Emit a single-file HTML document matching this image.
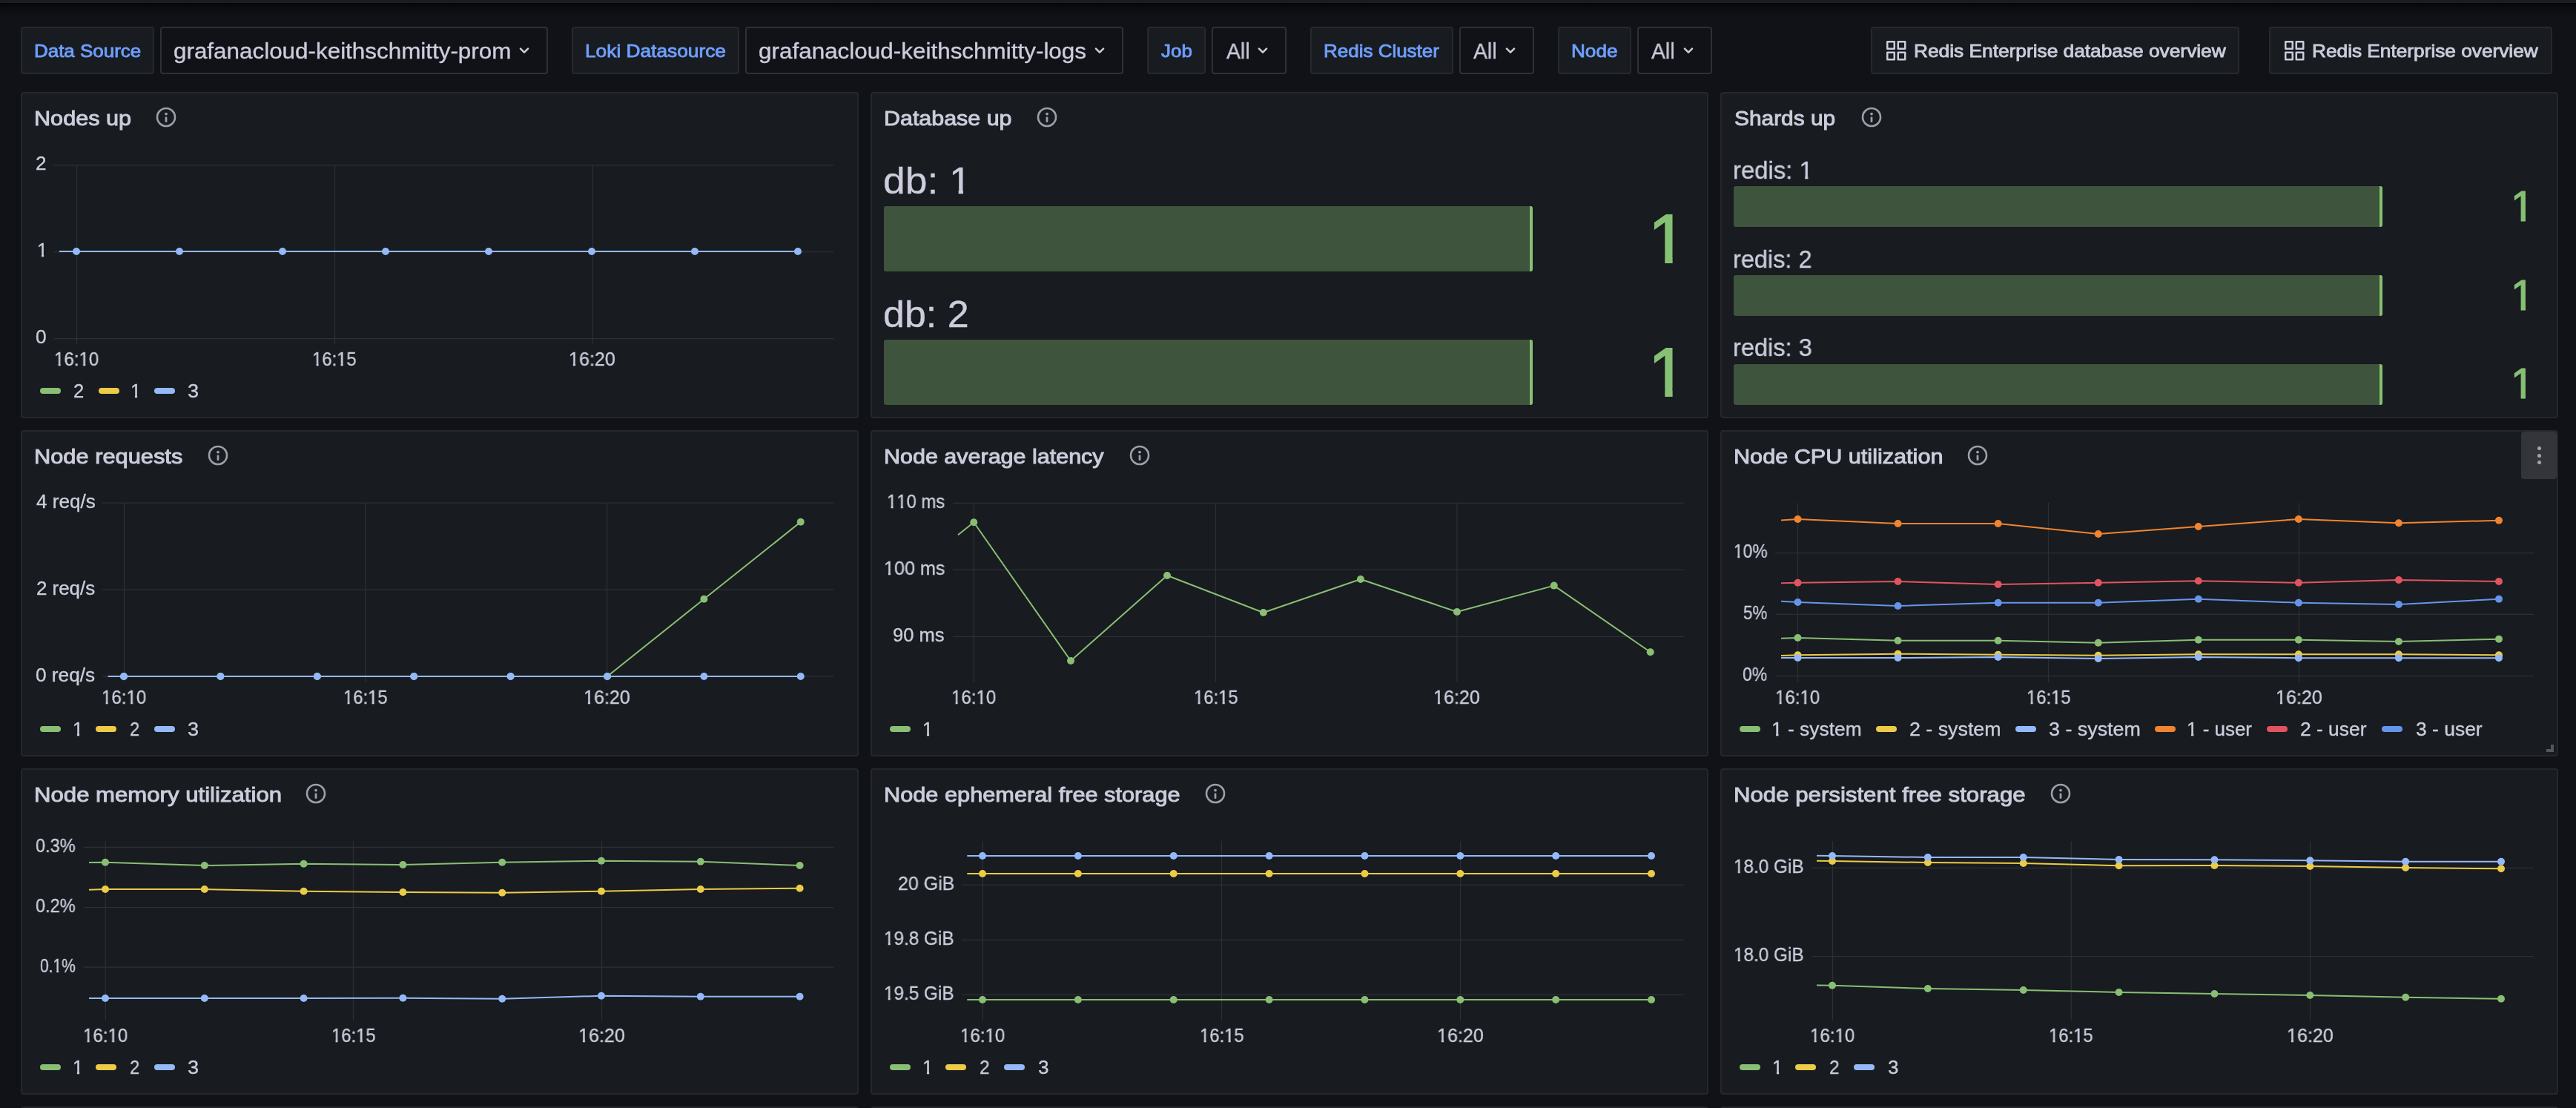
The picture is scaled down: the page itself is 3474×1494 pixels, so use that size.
<!DOCTYPE html>
<html lang="en"><head><meta charset="utf-8"><title>Redis Enterprise node overview</title><style>
*{box-sizing:border-box;margin:0;padding:0}
html,body{width:3474px;height:1494px;overflow:hidden;background:#111217}
body{position:relative;font-family:"Liberation Sans",sans-serif;color:#ccccdc}
.t{position:absolute;white-space:nowrap;line-height:1;font-weight:400;will-change:transform;transform-origin:0 0;font-kerning:none}
.topstrip{position:absolute;left:0;top:0;width:3474px;height:4px;background:#1b1d22}
.topshadow{position:absolute;left:0;top:4px;width:3474px;height:22px;background:linear-gradient(rgba(3,3,5,.85),rgba(5,5,8,.55) 22%,rgba(8,8,11,.25) 55%,rgba(17,18,23,0))}
.lbl,.sel,.lnk{position:absolute;top:36px;height:64px;border-radius:4px;border:2px solid #2a2c32}
.lbl,.lnk{background:#181b1f;border-color:#26282e}
.sel{background:#111217;border-color:#2e3036}
.chev,.apps,.info,.chart{position:absolute}
.panel{position:absolute;background:#181b1f;border:2px solid #25272d;border-radius:4px}
.bgval{clip-path:polygon(0 0,100% 0,100% 74%,.352em 74%,.352em 100%,.24em 100%,.24em 74%,0 74%)}
.sw{position:absolute;width:28px;height:8px;border-radius:4px}
.bar{position:absolute;background:#3e543c;border-radius:3px;overflow:hidden}
.bar b{position:absolute;right:0;top:0;bottom:0;width:4px;background:#86c074}
.menu{position:absolute;left:3400px;top:582px;width:48px;height:64px;border-radius:4px;background:#33353b}
.menu i{position:absolute;left:21.5px;width:5px;height:5px;border-radius:50%;background:#a3a4b0}
.menu i:nth-child(1){top:20px}.menu i:nth-child(2){top:29.5px}.menu i:nth-child(3){top:39px}
.resize{position:absolute;left:3434px;top:1004px;width:10px;height:10px;border-right:4px solid #565656;border-bottom:4px solid #565656}
.o0{clip-path:polygon(0 0,100% 0,100% 71.63%,0.358em 71.63%,0.358em 100%,0.232em 100%,0.232em 71.63%,0 71.63%)}
.o1{clip-path:polygon(0 0,100% 0,100% 74.30%,0.354em 74.30%,0.354em 100%,0.236em 100%,0.236em 74.30%,0 74.30%)}
.o2{clip-path:polygon(0 0,100% 0,100% 73.53%,0.356em 73.53%,0.356em 100%,0.234em 100%,0.234em 73.53%,0 73.53%)}
.o{display:inline-block}
</style></head>
<body>
<header class="topstrip"></header><div class="topshadow"></div>
<nav class="controls">
<div class="lbl" style="left:28px;width:180px"></div><span class="t lbltxt" style="left:45.91px;top:57px;font-size:24.0px;color:#6e9fff;transform:scaleX(1.0809);-webkit-text-stroke:0.85px #6e9fff;">Data Source</span>
<div class="sel" style="left:216px;width:523px"></div><span class="t seltxt" style="left:233.99px;top:54px;font-size:29.4px;color:#ccccdc;transform:scaleX(1.0681);-webkit-text-stroke:0.35px #ccccdc;">grafanacloud-keithschmitty-prom</span><svg class="chev" style="left:699.2px;top:62px" width="16" height="12" viewBox="0 0 16 12"><path d="M2.95 3.55L8 8.6l5.05-5.05" fill="none" stroke="#ccccdc" stroke-width="2.5" stroke-linecap="round" stroke-linejoin="round"/></svg>
<div class="lbl" style="left:771px;width:226px"></div><span class="t lbltxt" style="left:788.83px;top:57px;font-size:24.0px;color:#6e9fff;transform:scaleX(1.0952);-webkit-text-stroke:0.85px #6e9fff;">Loki Datasource</span>
<div class="sel" style="left:1005px;width:510px"></div><span class="t seltxt" style="left:1022.99px;top:54px;font-size:29.4px;color:#ccccdc;transform:scaleX(1.0696);-webkit-text-stroke:0.35px #ccccdc;">grafanacloud-keithschmitty-logs</span><svg class="chev" style="left:1475px;top:62px" width="16" height="12" viewBox="0 0 16 12"><path d="M2.95 3.55L8 8.6l5.05-5.05" fill="none" stroke="#ccccdc" stroke-width="2.5" stroke-linecap="round" stroke-linejoin="round"/></svg>
<div class="lbl" style="left:1547px;width:79px"></div><span class="t lbltxt" style="left:1566.42px;top:57px;font-size:24.0px;color:#6e9fff;transform:scaleX(1.0804);-webkit-text-stroke:0.85px #6e9fff;">Job</span>
<div class="sel" style="left:1634px;width:101px"></div><span class="t seltxt" style="left:1653.95px;top:54px;font-size:29.4px;color:#ccccdc;transform:scaleX(0.9667);-webkit-text-stroke:0.35px #ccccdc;">All</span><svg class="chev" style="left:1695.25px;top:62px" width="16" height="12" viewBox="0 0 16 12"><path d="M2.95 3.55L8 8.6l5.05-5.05" fill="none" stroke="#ccccdc" stroke-width="2.5" stroke-linecap="round" stroke-linejoin="round"/></svg>
<div class="lbl" style="left:1767px;width:193px"></div><span class="t lbltxt" style="left:1785.41px;top:57px;font-size:24.0px;color:#6e9fff;transform:scaleX(1.0824);-webkit-text-stroke:0.85px #6e9fff;">Redis Cluster</span>
<div class="sel" style="left:1968px;width:101px"></div><span class="t seltxt" style="left:1987.20px;top:54px;font-size:29.4px;color:#ccccdc;transform:scaleX(0.9667);-webkit-text-stroke:0.35px #ccccdc;">All</span><svg class="chev" style="left:2028.75px;top:62px" width="16" height="12" viewBox="0 0 16 12"><path d="M2.95 3.55L8 8.6l5.05-5.05" fill="none" stroke="#ccccdc" stroke-width="2.5" stroke-linecap="round" stroke-linejoin="round"/></svg>
<div class="lbl" style="left:2101px;width:99px"></div><span class="t lbltxt" style="left:2119.15px;top:57px;font-size:24.0px;color:#6e9fff;transform:scaleX(1.0889);-webkit-text-stroke:0.85px #6e9fff;">Node</span>
<div class="sel" style="left:2208px;width:101px"></div><span class="t seltxt" style="left:2227.20px;top:54px;font-size:29.4px;color:#ccccdc;transform:scaleX(0.9667);-webkit-text-stroke:0.35px #ccccdc;">All</span><svg class="chev" style="left:2268.75px;top:62px" width="16" height="12" viewBox="0 0 16 12"><path d="M2.95 3.55L8 8.6l5.05-5.05" fill="none" stroke="#ccccdc" stroke-width="2.5" stroke-linecap="round" stroke-linejoin="round"/></svg>
<a class="lnk" style="left:2523px;width:497px"></a><svg class="apps" style="left:2543.5px;top:54.6px" width="27" height="27" viewBox="0 0 27 27"><path d="M1.25 1.25h9.5v9.5h-9.5zM15.75 1.25h9.5v9.5h-9.5zM1.25 15.75h9.5v9.5h-9.5zM15.75 15.75h9.5v9.5h-9.5z" fill="none" stroke="#ccccdc" stroke-width="2.5" stroke-linejoin="round"/></svg><span class="t lnktxt" style="left:2580.64px;top:57px;font-size:24.0px;color:#ccccdc;transform:scaleX(1.0950);-webkit-text-stroke:0.85px #ccccdc;">Redis Enterprise database overview</span>
<a class="lnk" style="left:3060px;width:382px"></a><svg class="apps" style="left:3080.75px;top:54.6px" width="27" height="27" viewBox="0 0 27 27"><path d="M1.25 1.25h9.5v9.5h-9.5zM15.75 1.25h9.5v9.5h-9.5zM1.25 15.75h9.5v9.5h-9.5zM15.75 15.75h9.5v9.5h-9.5z" fill="none" stroke="#ccccdc" stroke-width="2.5" stroke-linejoin="round"/></svg><span class="t lnktxt" style="left:3118.14px;top:57px;font-size:24.0px;color:#ccccdc;transform:scaleX(1.0931);-webkit-text-stroke:0.85px #ccccdc;">Redis Enterprise overview</span>
</nav>
<main>
<section><div class="panel" style="left:28px;top:124px;width:1130px;height:440px"></div>
<span class="t title" style="left:45.92px;top:146px;font-size:28.0px;color:#ccccdc;transform:scaleX(1.0931);-webkit-text-stroke:0.95px #ccccdc;">Nodes up</span><svg class="info" style="left:209px;top:143px" width="30" height="30" viewBox="0 0 30 30"><circle cx="15" cy="15" r="12" fill="none" stroke="#9e9eab" stroke-width="2.6"/><circle cx="15" cy="10.6" r="1.9" fill="#9e9eab"/><rect x="13.6" y="14.4" width="2.8" height="7.6" rx="1.2" fill="#9e9eab"/></svg>
<svg class="chart" style="left:28px;top:124px" width="1130" height="440" viewBox="28 124 1130 440"><path d="M103.5 222V464M451.5 222V464M799.5 222V464M72.5 222.5H1124.5M72.5 339.5H1124.5M72.5 456.5H1124.5" stroke="#2c3035" stroke-width="1.25" fill="none"/><path d="M80 339L103 339L242 339L381 339L520 339L659 339L798 339L937 339L1076 339" stroke="#94b9f8" stroke-width="2" fill="none" stroke-linejoin="round"/><g fill="#94b9f8"><circle cx="103" cy="339" r="5"/><circle cx="242" cy="339" r="5"/><circle cx="381" cy="339" r="5"/><circle cx="520" cy="339" r="5"/><circle cx="659" cy="339" r="5"/><circle cx="798" cy="339" r="5"/><circle cx="937" cy="339" r="5"/><circle cx="1076" cy="339" r="5"/></g></svg>
<span class="t tick" style="left:47.80px;top:208px;font-size:25.56px;color:#ccccdc;transform:scaleX(1.0194);-webkit-text-stroke:0.35px #ccccdc;">2</span><span class="t tick o0" style="left:49.77px;top:325px;font-size:25.56px;color:#ccccdc;-webkit-text-stroke:0.35px #ccccdc;">1</span><span class="t tick" style="left:47.55px;top:442px;font-size:25.56px;color:#ccccdc;transform:scaleX(1.0286);-webkit-text-stroke:0.35px #ccccdc;">0</span>
<span class="t tick" style="left:72.67px;top:472px;font-size:25.56px;color:#ccccdc;transform:scaleX(0.9423);-webkit-text-stroke:0.35px #ccccdc;"><span class="o o0">1</span>6:<span class="o o0">1</span>0</span><span class="t tick" style="left:420.57px;top:472px;font-size:25.56px;color:#ccccdc;transform:scaleX(0.9318);-webkit-text-stroke:0.35px #ccccdc;"><span class="o o0">1</span>6:<span class="o o0">1</span>5</span><span class="t tick" style="left:767.37px;top:472px;font-size:25.56px;color:#ccccdc;transform:scaleX(0.9821);-webkit-text-stroke:0.35px #ccccdc;"><span class="o o0">1</span>6:20</span>
<i class="sw" style="left:53.75px;top:523px;background:#89be74"></i><span class="t leg" style="left:98.85px;top:515px;font-size:25.56px;color:#ccccdc;transform:scaleX(0.9763);-webkit-text-stroke:0.35px #ccccdc;">2</span><i class="sw" style="left:133px;top:523px;background:#ebcb47"></i><span class="t leg o0" style="left:176.03px;top:515px;font-size:25.56px;color:#ccccdc;-webkit-text-stroke:0.35px #ccccdc;">1</span><i class="sw" style="left:208px;top:523px;background:#94b9f8"></i><span class="t leg" style="left:253.02px;top:515px;font-size:25.56px;color:#ccccdc;transform:scaleX(1.0598);-webkit-text-stroke:0.35px #ccccdc;">3</span>
</section>
<section><div class="panel" style="left:1174px;top:124px;width:1130px;height:440px"></div>
<span class="t title" style="left:1191.93px;top:146px;font-size:28.0px;color:#ccccdc;transform:scaleX(1.0863);-webkit-text-stroke:0.95px #ccccdc;">Database up</span><svg class="info" style="left:1396.5px;top:143px" width="30" height="30" viewBox="0 0 30 30"><circle cx="15" cy="15" r="12" fill="none" stroke="#9e9eab" stroke-width="2.6"/><circle cx="15" cy="10.6" r="1.9" fill="#9e9eab"/><rect x="13.6" y="14.4" width="2.8" height="7.6" rx="1.2" fill="#9e9eab"/></svg>
<span class="t bglbl" style="left:1191.32px;top:219px;font-size:50.4px;color:#ccccdc;transform:scaleX(1.0594);-webkit-text-stroke:0.35px #ccccdc;">db: <span class="o o1">1</span></span><div class="bar" style="left:1192px;top:278px;width:875px;height:88px"><b></b></div><span class="t bgval" style="left:2222.97px;top:276px;font-size:92.7px;color:#86c074;-webkit-text-stroke:1.98px #86c074;">1</span><span class="t bglbl" style="left:1191.38px;top:399px;font-size:50.4px;color:#ccccdc;transform:scaleX(1.0321);-webkit-text-stroke:0.35px #ccccdc;">db: 2</span><div class="bar" style="left:1192px;top:458px;width:875px;height:88px"><b></b></div><span class="t bgval" style="left:2222.97px;top:456px;font-size:92.7px;color:#86c074;-webkit-text-stroke:1.98px #86c074;">1</span>
</section>
<section><div class="panel" style="left:2320px;top:124px;width:1130px;height:440px"></div>
<span class="t title" style="left:2339.04px;top:146px;font-size:28.0px;color:#ccccdc;transform:scaleX(1.0664);-webkit-text-stroke:0.95px #ccccdc;">Shards up</span><svg class="info" style="left:2508.75px;top:143px" width="30" height="30" viewBox="0 0 30 30"><circle cx="15" cy="15" r="12" fill="none" stroke="#9e9eab" stroke-width="2.6"/><circle cx="15" cy="10.6" r="1.9" fill="#9e9eab"/><rect x="13.6" y="14.4" width="2.8" height="7.6" rx="1.2" fill="#9e9eab"/></svg>
<span class="t bglbl" style="left:2337.37px;top:213px;font-size:33.6px;color:#ccccdc;transform:scaleX(0.9790);-webkit-text-stroke:0.35px #ccccdc;">redis: <span class="o o2">1</span></span><div class="bar" style="left:2338px;top:251px;width:875px;height:55px"><b></b></div><span class="t bgval" style="left:3386.00px;top:251px;font-size:56.65px;color:#86c074;-webkit-text-stroke:1.21px #86c074;">1</span><span class="t bglbl" style="left:2337.40px;top:333px;font-size:33.6px;color:#ccccdc;transform:scaleX(0.9674);-webkit-text-stroke:0.35px #ccccdc;">redis: 2</span><div class="bar" style="left:2338px;top:371px;width:875px;height:54.5px"><b></b></div><span class="t bgval" style="left:3386.00px;top:371px;font-size:56.65px;color:#86c074;-webkit-text-stroke:1.21px #86c074;">1</span><span class="t bglbl" style="left:2337.39px;top:452px;font-size:33.6px;color:#ccccdc;transform:scaleX(0.9698);-webkit-text-stroke:0.35px #ccccdc;">redis: 3</span><div class="bar" style="left:2338px;top:491px;width:875px;height:54.5px"><b></b></div><span class="t bgval" style="left:3386.00px;top:490px;font-size:56.65px;color:#86c074;-webkit-text-stroke:1.21px #86c074;">1</span>
</section>
<section><div class="panel" style="left:28px;top:580px;width:1130px;height:440px"></div>
<span class="t title" style="left:45.90px;top:602px;font-size:28.0px;color:#ccccdc;transform:scaleX(1.1000);-webkit-text-stroke:0.95px #ccccdc;">Node requests</span><svg class="info" style="left:278.5px;top:599px" width="30" height="30" viewBox="0 0 30 30"><circle cx="15" cy="15" r="12" fill="none" stroke="#9e9eab" stroke-width="2.6"/><circle cx="15" cy="10.6" r="1.9" fill="#9e9eab"/><rect x="13.6" y="14.4" width="2.8" height="7.6" rx="1.2" fill="#9e9eab"/></svg>
<svg class="chart" style="left:28px;top:580px" width="1130" height="440" viewBox="28 580 1130 440"><path d="M167.5 678V920M493 678V920M818.5 678V920M138 678H1124.3M138 795H1124.3M138 912H1124.3" stroke="#2c3035" stroke-width="1.25" fill="none"/><path d="M145.75 912L167.0 912L297.4 912L427.8 912L558.2 912L688.6 912L819.0 912L949.4 807.8L1079.8 703.8" stroke="#89be74" stroke-width="2" fill="none" stroke-linejoin="round"/><g fill="#89be74"><circle cx="167.0" cy="912" r="5"/><circle cx="297.4" cy="912" r="5"/><circle cx="427.8" cy="912" r="5"/><circle cx="558.2" cy="912" r="5"/><circle cx="688.6" cy="912" r="5"/><circle cx="819.0" cy="912" r="5"/><circle cx="949.4" cy="807.8" r="5"/><circle cx="1079.8" cy="703.8" r="5"/></g><path d="M145.75 912L167.0 912L297.4 912L427.8 912L558.2 912L688.6 912L819.0 912L949.4 912L1079.8 912" stroke="#94b9f8" stroke-width="2" fill="none" stroke-linejoin="round"/><g fill="#94b9f8"><circle cx="167.0" cy="912" r="5"/><circle cx="297.4" cy="912" r="5"/><circle cx="427.8" cy="912" r="5"/><circle cx="558.2" cy="912" r="5"/><circle cx="688.6" cy="912" r="5"/><circle cx="819.0" cy="912" r="5"/><circle cx="949.4" cy="912" r="5"/><circle cx="1079.8" cy="912" r="5"/></g></svg>
<span class="t tick" style="left:48.69px;top:664px;font-size:25.56px;color:#ccccdc;transform:scaleX(1.0215);-webkit-text-stroke:0.35px #ccccdc;">4 req/s</span><span class="t tick" style="left:49.31px;top:781px;font-size:25.56px;color:#ccccdc;transform:scaleX(1.0135);-webkit-text-stroke:0.35px #ccccdc;">2 req/s</span><span class="t tick" style="left:48.30px;top:898px;font-size:25.56px;color:#ccccdc;transform:scaleX(1.0265);-webkit-text-stroke:0.35px #ccccdc;">0 req/s</span>
<span class="t tick" style="left:136.67px;top:928px;font-size:25.56px;color:#ccccdc;transform:scaleX(0.9423);-webkit-text-stroke:0.35px #ccccdc;"><span class="o o0">1</span>6:<span class="o o0">1</span>0</span><span class="t tick" style="left:463.07px;top:928px;font-size:25.56px;color:#ccccdc;transform:scaleX(0.9318);-webkit-text-stroke:0.35px #ccccdc;"><span class="o o0">1</span>6:<span class="o o0">1</span>5</span><span class="t tick" style="left:786.87px;top:928px;font-size:25.56px;color:#ccccdc;transform:scaleX(0.9821);-webkit-text-stroke:0.35px #ccccdc;"><span class="o o0">1</span>6:20</span>
<i class="sw" style="left:53.75px;top:979px;background:#89be74"></i><span class="t leg o0" style="left:97.53px;top:971px;font-size:25.56px;color:#ccccdc;-webkit-text-stroke:0.35px #ccccdc;">1</span><i class="sw" style="left:129px;top:979px;background:#ebcb47"></i><span class="t leg" style="left:174.91px;top:971px;font-size:25.56px;color:#ccccdc;transform:scaleX(0.9333);-webkit-text-stroke:0.35px #ccccdc;">2</span><i class="sw" style="left:208px;top:979px;background:#94b9f8"></i><span class="t leg" style="left:253.02px;top:971px;font-size:25.56px;color:#ccccdc;transform:scaleX(1.0598);-webkit-text-stroke:0.35px #ccccdc;">3</span>
</section>
<section><div class="panel" style="left:1174px;top:580px;width:1130px;height:440px"></div>
<span class="t title" style="left:1191.93px;top:602px;font-size:28.0px;color:#ccccdc;transform:scaleX(1.0888);-webkit-text-stroke:0.95px #ccccdc;">Node average latency</span><svg class="info" style="left:1521.75px;top:599px" width="30" height="30" viewBox="0 0 30 30"><circle cx="15" cy="15" r="12" fill="none" stroke="#9e9eab" stroke-width="2.6"/><circle cx="15" cy="10.6" r="1.9" fill="#9e9eab"/><rect x="13.6" y="14.4" width="2.8" height="7.6" rx="1.2" fill="#9e9eab"/></svg>
<svg class="chart" style="left:1174px;top:580px" width="1130" height="440" viewBox="1174 580 1130 440"><path d="M1313.25 678V920M1639.5 678V920M1965 678V920M1285 678.25H2270.5M1285 768.25H2270.5M1285 858.25H2270.5" stroke="#2c3035" stroke-width="1.25" fill="none"/><path d="M1292 721.25L1313.25 704.25L1444 891L1574 776L1703.8 826L1834.9 781L1964.9 825L2095.7 789.6L2225.7 879.2" stroke="#89be74" stroke-width="2" fill="none" stroke-linejoin="round"/><g fill="#89be74"><circle cx="1313.25" cy="704.25" r="5"/><circle cx="1444" cy="891" r="5"/><circle cx="1574" cy="776" r="5"/><circle cx="1703.8" cy="826" r="5"/><circle cx="1834.9" cy="781" r="5"/><circle cx="1964.9" cy="825" r="5"/><circle cx="2095.7" cy="789.6" r="5"/><circle cx="2225.7" cy="879.2" r="5"/></g></svg>
<span class="t tick" style="left:1195.69px;top:664px;font-size:25.56px;color:#ccccdc;transform:scaleX(0.9333);-webkit-text-stroke:0.35px #ccccdc;"><span class="o o0">1</span><span class="o o0">1</span>0 ms</span><span class="t tick" style="left:1191.57px;top:754px;font-size:25.56px;color:#ccccdc;transform:scaleX(0.9832);-webkit-text-stroke:0.35px #ccccdc;"><span class="o o0">1</span>00 ms</span><span class="t tick" style="left:1204.45px;top:844px;font-size:25.56px;color:#ccccdc;-webkit-text-stroke:0.35px #ccccdc;">90 ms</span>
<span class="t tick" style="left:1282.67px;top:928px;font-size:25.56px;color:#ccccdc;transform:scaleX(0.9423);-webkit-text-stroke:0.35px #ccccdc;"><span class="o o0">1</span>6:<span class="o o0">1</span>0</span><span class="t tick" style="left:1609.57px;top:928px;font-size:25.56px;color:#ccccdc;transform:scaleX(0.9318);-webkit-text-stroke:0.35px #ccccdc;"><span class="o o0">1</span>6:<span class="o o0">1</span>5</span><span class="t tick" style="left:1933.37px;top:928px;font-size:25.56px;color:#ccccdc;transform:scaleX(0.9821);-webkit-text-stroke:0.35px #ccccdc;"><span class="o o0">1</span>6:20</span>
<i class="sw" style="left:1200px;top:979px;background:#89be74"></i><span class="t leg o0" style="left:1243.53px;top:971px;font-size:25.56px;color:#ccccdc;-webkit-text-stroke:0.35px #ccccdc;">1</span>
</section>
<section><div class="panel" style="left:2320px;top:580px;width:1130px;height:440px"></div>
<span class="t title" style="left:2337.92px;top:602px;font-size:28.0px;color:#ccccdc;transform:scaleX(1.0933);-webkit-text-stroke:0.95px #ccccdc;">Node CPU utilization</span><svg class="info" style="left:2651.75px;top:599px" width="30" height="30" viewBox="0 0 30 30"><circle cx="15" cy="15" r="12" fill="none" stroke="#9e9eab" stroke-width="2.6"/><circle cx="15" cy="10.6" r="1.9" fill="#9e9eab"/><rect x="13.6" y="14.4" width="2.8" height="7.6" rx="1.2" fill="#9e9eab"/></svg>
<svg class="chart" style="left:2320px;top:580px" width="1130" height="440" viewBox="2320 580 1130 440"><path d="M2424.5 678V920M2762.5 678V920M3100.5 678V920M2394.5 745.5H3416.75M2394.5 828.25H3416.75M2394.5 911.5H3416.75" stroke="#2c3035" stroke-width="1.25" fill="none"/><path d="M2402 860.75L2424.5 860L2559.57 863.75L2694.64 863.75L2829.71 866.75L2964.78 862.75L3099.85 862.75L3234.92 865L3369.99 861.75" stroke="#89be74" stroke-width="2" fill="none" stroke-linejoin="round"/><g fill="#89be74"><circle cx="2424.5" cy="860" r="5"/><circle cx="2559.57" cy="863.75" r="5"/><circle cx="2694.64" cy="863.75" r="5"/><circle cx="2829.71" cy="866.75" r="5"/><circle cx="2964.78" cy="862.75" r="5"/><circle cx="3099.85" cy="862.75" r="5"/><circle cx="3234.92" cy="865" r="5"/><circle cx="3369.99" cy="861.75" r="5"/></g><path d="M2402 884L2424.5 883.25L2559.57 881.75L2694.64 882.75L2829.71 883.75L2964.78 882.25L3099.85 882.25L3234.92 882.25L3369.99 883.25" stroke="#ebcb47" stroke-width="2" fill="none" stroke-linejoin="round"/><g fill="#ebcb47"><circle cx="2424.5" cy="883.25" r="5"/><circle cx="2559.57" cy="881.75" r="5"/><circle cx="2694.64" cy="882.75" r="5"/><circle cx="2829.71" cy="883.75" r="5"/><circle cx="2964.78" cy="882.25" r="5"/><circle cx="3099.85" cy="882.25" r="5"/><circle cx="3234.92" cy="882.25" r="5"/><circle cx="3369.99" cy="883.25" r="5"/></g><path d="M2402 887L2424.5 887L2559.57 887L2694.64 886L2829.71 888L2964.78 886L3099.85 887.25L3234.92 887.25L3369.99 887.25" stroke="#94b9f8" stroke-width="2" fill="none" stroke-linejoin="round"/><g fill="#94b9f8"><circle cx="2424.5" cy="887" r="5"/><circle cx="2559.57" cy="887" r="5"/><circle cx="2694.64" cy="886" r="5"/><circle cx="2829.71" cy="888" r="5"/><circle cx="2964.78" cy="886" r="5"/><circle cx="3099.85" cy="887.25" r="5"/><circle cx="3234.92" cy="887.25" r="5"/><circle cx="3369.99" cy="887.25" r="5"/></g><path d="M2402 701.5L2424.5 700L2559.57 706L2694.64 706L2829.71 720L2964.78 710L3099.85 700L3234.92 705.25L3369.99 701.75" stroke="#f08430" stroke-width="2" fill="none" stroke-linejoin="round"/><g fill="#f08430"><circle cx="2424.5" cy="700" r="5"/><circle cx="2559.57" cy="706" r="5"/><circle cx="2694.64" cy="706" r="5"/><circle cx="2829.71" cy="720" r="5"/><circle cx="2964.78" cy="710" r="5"/><circle cx="3099.85" cy="700" r="5"/><circle cx="3234.92" cy="705.25" r="5"/><circle cx="3369.99" cy="701.75" r="5"/></g><path d="M2402 786.25L2424.5 785.75L2559.57 784L2694.64 788L2829.71 785.75L2964.78 783.25L3099.85 785.75L3234.92 782L3369.99 784" stroke="#e05460" stroke-width="2" fill="none" stroke-linejoin="round"/><g fill="#e05460"><circle cx="2424.5" cy="785.75" r="5"/><circle cx="2559.57" cy="784" r="5"/><circle cx="2694.64" cy="788" r="5"/><circle cx="2829.71" cy="785.75" r="5"/><circle cx="2964.78" cy="783.25" r="5"/><circle cx="3099.85" cy="785.75" r="5"/><circle cx="3234.92" cy="782" r="5"/><circle cx="3369.99" cy="784" r="5"/></g><path d="M2402 810.75L2424.5 812L2559.57 817L2694.64 812.75L2829.71 812.75L2964.78 807.75L3099.85 812.75L3234.92 815L3369.99 807.75" stroke="#6595eb" stroke-width="2" fill="none" stroke-linejoin="round"/><g fill="#6595eb"><circle cx="2424.5" cy="812" r="5"/><circle cx="2559.57" cy="817" r="5"/><circle cx="2694.64" cy="812.75" r="5"/><circle cx="2829.71" cy="812.75" r="5"/><circle cx="2964.78" cy="807.75" r="5"/><circle cx="3099.85" cy="812.75" r="5"/><circle cx="3234.92" cy="815" r="5"/><circle cx="3369.99" cy="807.75" r="5"/></g></svg>
<span class="t tick" style="left:2337.80px;top:731px;font-size:25.56px;color:#ccccdc;transform:scaleX(0.8904);-webkit-text-stroke:0.35px #ccccdc;"><span class="o o0">1</span>0%</span><span class="t tick" style="left:2350.95px;top:814px;font-size:25.56px;color:#ccccdc;transform:scaleX(0.8760);-webkit-text-stroke:0.35px #ccccdc;">5%</span><span class="t tick" style="left:2350.18px;top:897px;font-size:25.56px;color:#ccccdc;transform:scaleX(0.8975);-webkit-text-stroke:0.35px #ccccdc;">0%</span>
<span class="t tick" style="left:2394.17px;top:928px;font-size:25.56px;color:#ccccdc;transform:scaleX(0.9423);-webkit-text-stroke:0.35px #ccccdc;"><span class="o o0">1</span>6:<span class="o o0">1</span>0</span><span class="t tick" style="left:2732.57px;top:928px;font-size:25.56px;color:#ccccdc;transform:scaleX(0.9318);-webkit-text-stroke:0.35px #ccccdc;"><span class="o o0">1</span>6:<span class="o o0">1</span>5</span><span class="t tick" style="left:3068.87px;top:928px;font-size:25.56px;color:#ccccdc;transform:scaleX(0.9821);-webkit-text-stroke:0.35px #ccccdc;"><span class="o o0">1</span>6:20</span>
<i class="sw" style="left:2346.25px;top:979px;background:#89be74"></i><span class="t leg" style="left:2388.94px;top:971px;font-size:25.56px;color:#ccccdc;transform:scaleX(1.0323);-webkit-text-stroke:0.35px #ccccdc;"><span class="o o0">1</span> - system</span><i class="sw" style="left:2530px;top:979px;background:#ebcb47"></i><span class="t leg" style="left:2575.26px;top:971px;font-size:25.56px;color:#ccccdc;transform:scaleX(1.0490);-webkit-text-stroke:0.35px #ccccdc;">2 - system</span><i class="sw" style="left:2718px;top:979px;background:#94b9f8"></i><span class="t leg" style="left:2763.02px;top:971px;font-size:25.56px;color:#ccccdc;transform:scaleX(1.0510);-webkit-text-stroke:0.35px #ccccdc;">3 - system</span><i class="sw" style="left:2906.25px;top:979px;background:#f08430"></i><span class="t leg" style="left:2949.23px;top:971px;font-size:25.56px;color:#ccccdc;transform:scaleX(1.0158);-webkit-text-stroke:0.35px #ccccdc;"><span class="o o0">1</span> - user</span><i class="sw" style="left:3057px;top:979px;background:#e05460"></i><span class="t leg" style="left:3102.28px;top:971px;font-size:25.56px;color:#ccccdc;transform:scaleX(1.0327);-webkit-text-stroke:0.35px #ccccdc;">2 - user</span><i class="sw" style="left:3212px;top:979px;background:#6595eb"></i><span class="t leg" style="left:3257.54px;top:971px;font-size:25.56px;color:#ccccdc;transform:scaleX(1.0355);-webkit-text-stroke:0.35px #ccccdc;">3 - user</span>
<div class="menu"><i></i><i></i><i></i></div><span class="resize"></span>
</section>
<section><div class="panel" style="left:28px;top:1036px;width:1130px;height:440px"></div>
<span class="t title" style="left:45.87px;top:1058px;font-size:28.0px;color:#ccccdc;transform:scaleX(1.1122);-webkit-text-stroke:0.95px #ccccdc;">Node memory utilization</span><svg class="info" style="left:411.25px;top:1055px" width="30" height="30" viewBox="0 0 30 30"><circle cx="15" cy="15" r="12" fill="none" stroke="#9e9eab" stroke-width="2.6"/><circle cx="15" cy="10.6" r="1.9" fill="#9e9eab"/><rect x="13.6" y="14.4" width="2.8" height="7.6" rx="1.2" fill="#9e9eab"/></svg>
<svg class="chart" style="left:28px;top:1036px" width="1130" height="440" viewBox="28 1036 1130 440"><path d="M142.25 1134V1376M476.5 1134V1376M811.5 1134V1376M112.5 1142.25H1124.25M112.5 1223.5H1124.25M112.5 1304H1124.25" stroke="#2c3035" stroke-width="1.25" fill="none"/><path d="M120 1163L142.0 1162.75L275.8 1167L409.6 1164.75L543.4 1166L677.2 1162.75L811.0 1160.75L944.8 1161.75L1078.6 1167" stroke="#89be74" stroke-width="2" fill="none" stroke-linejoin="round"/><g fill="#89be74"><circle cx="142.0" cy="1162.75" r="5"/><circle cx="275.8" cy="1167" r="5"/><circle cx="409.6" cy="1164.75" r="5"/><circle cx="543.4" cy="1166" r="5"/><circle cx="677.2" cy="1162.75" r="5"/><circle cx="811.0" cy="1160.75" r="5"/><circle cx="944.8" cy="1161.75" r="5"/><circle cx="1078.6" cy="1167" r="5"/></g><path d="M120 1199.75L142.0 1199L275.8 1199L409.6 1201.75L543.4 1203L677.2 1203.75L811.0 1201.75L944.8 1199L1078.6 1197.75" stroke="#ebcb47" stroke-width="2" fill="none" stroke-linejoin="round"/><g fill="#ebcb47"><circle cx="142.0" cy="1199" r="5"/><circle cx="275.8" cy="1199" r="5"/><circle cx="409.6" cy="1201.75" r="5"/><circle cx="543.4" cy="1203" r="5"/><circle cx="677.2" cy="1203.75" r="5"/><circle cx="811.0" cy="1201.75" r="5"/><circle cx="944.8" cy="1199" r="5"/><circle cx="1078.6" cy="1197.75" r="5"/></g><path d="M120 1346L142.0 1346L275.8 1346L409.6 1346L543.4 1345.75L677.2 1346.75L811.0 1342.75L944.8 1343.75L1078.6 1343.75" stroke="#94b9f8" stroke-width="2" fill="none" stroke-linejoin="round"/><g fill="#94b9f8"><circle cx="142.0" cy="1346" r="5"/><circle cx="275.8" cy="1346" r="5"/><circle cx="409.6" cy="1346" r="5"/><circle cx="543.4" cy="1345.75" r="5"/><circle cx="677.2" cy="1346.75" r="5"/><circle cx="811.0" cy="1342.75" r="5"/><circle cx="944.8" cy="1343.75" r="5"/><circle cx="1078.6" cy="1343.75" r="5"/></g></svg>
<span class="t tick" style="left:47.65px;top:1128px;font-size:25.56px;color:#ccccdc;transform:scaleX(0.9226);-webkit-text-stroke:0.35px #ccccdc;">0.3%</span><span class="t tick" style="left:47.65px;top:1209px;font-size:25.56px;color:#ccccdc;transform:scaleX(0.9226);-webkit-text-stroke:0.35px #ccccdc;">0.2%</span><span class="t tick" style="left:53.50px;top:1290px;font-size:25.56px;color:#ccccdc;transform:scaleX(0.8203);-webkit-text-stroke:0.35px #ccccdc;">0.<span class="o o0">1</span>%</span>
<span class="t tick" style="left:111.67px;top:1384px;font-size:25.56px;color:#ccccdc;transform:scaleX(0.9423);-webkit-text-stroke:0.35px #ccccdc;"><span class="o o0">1</span>6:<span class="o o0">1</span>0</span><span class="t tick" style="left:446.57px;top:1384px;font-size:25.56px;color:#ccccdc;transform:scaleX(0.9318);-webkit-text-stroke:0.35px #ccccdc;"><span class="o o0">1</span>6:<span class="o o0">1</span>5</span><span class="t tick" style="left:779.87px;top:1384px;font-size:25.56px;color:#ccccdc;transform:scaleX(0.9821);-webkit-text-stroke:0.35px #ccccdc;"><span class="o o0">1</span>6:20</span>
<i class="sw" style="left:53.75px;top:1435px;background:#89be74"></i><span class="t leg o0" style="left:97.53px;top:1427px;font-size:25.56px;color:#ccccdc;-webkit-text-stroke:0.35px #ccccdc;">1</span><i class="sw" style="left:129px;top:1435px;background:#ebcb47"></i><span class="t leg" style="left:174.91px;top:1427px;font-size:25.56px;color:#ccccdc;transform:scaleX(0.9333);-webkit-text-stroke:0.35px #ccccdc;">2</span><i class="sw" style="left:208px;top:1435px;background:#94b9f8"></i><span class="t leg" style="left:253.02px;top:1427px;font-size:25.56px;color:#ccccdc;transform:scaleX(1.0598);-webkit-text-stroke:0.35px #ccccdc;">3</span>
</section>
<section><div class="panel" style="left:1174px;top:1036px;width:1130px;height:440px"></div>
<span class="t title" style="left:1191.91px;top:1058px;font-size:28.0px;color:#ccccdc;transform:scaleX(1.0970);-webkit-text-stroke:0.95px #ccccdc;">Node ephemeral free storage</span><svg class="info" style="left:1623.5px;top:1055px" width="30" height="30" viewBox="0 0 30 30"><circle cx="15" cy="15" r="12" fill="none" stroke="#9e9eab" stroke-width="2.6"/><circle cx="15" cy="10.6" r="1.9" fill="#9e9eab"/><rect x="13.6" y="14.4" width="2.8" height="7.6" rx="1.2" fill="#9e9eab"/></svg>
<svg class="chart" style="left:1174px;top:1036px" width="1130" height="440" viewBox="1174 1036 1130 440"><path d="M1325.25 1134V1376M1647.5 1134V1376M1969.5 1134V1376M1296.75 1193H2270.5M1296.75 1267.25H2270.5M1296.75 1341.25H2270.5" stroke="#2c3035" stroke-width="1.25" fill="none"/><path d="M1304.25 1348L1325.0 1348L1453.86 1348L1582.72 1348L1711.58 1348L1840.44 1348L1969.3 1348L2098.16 1348L2227.02 1348" stroke="#89be74" stroke-width="2" fill="none" stroke-linejoin="round"/><g fill="#89be74"><circle cx="1325.0" cy="1348" r="5"/><circle cx="1453.86" cy="1348" r="5"/><circle cx="1582.72" cy="1348" r="5"/><circle cx="1711.58" cy="1348" r="5"/><circle cx="1840.44" cy="1348" r="5"/><circle cx="1969.3" cy="1348" r="5"/><circle cx="2098.16" cy="1348" r="5"/><circle cx="2227.02" cy="1348" r="5"/></g><path d="M1304.25 1178L1325.0 1178L1453.86 1178L1582.72 1178L1711.58 1178L1840.44 1178L1969.3 1178L2098.16 1178L2227.02 1178" stroke="#ebcb47" stroke-width="2" fill="none" stroke-linejoin="round"/><g fill="#ebcb47"><circle cx="1325.0" cy="1178" r="5"/><circle cx="1453.86" cy="1178" r="5"/><circle cx="1582.72" cy="1178" r="5"/><circle cx="1711.58" cy="1178" r="5"/><circle cx="1840.44" cy="1178" r="5"/><circle cx="1969.3" cy="1178" r="5"/><circle cx="2098.16" cy="1178" r="5"/><circle cx="2227.02" cy="1178" r="5"/></g><path d="M1304.25 1154L1325.0 1154L1453.86 1154L1582.72 1154L1711.58 1154L1840.44 1154L1969.3 1154L2098.16 1154L2227.02 1154" stroke="#94b9f8" stroke-width="2" fill="none" stroke-linejoin="round"/><g fill="#94b9f8"><circle cx="1325.0" cy="1154" r="5"/><circle cx="1453.86" cy="1154" r="5"/><circle cx="1582.72" cy="1154" r="5"/><circle cx="1711.58" cy="1154" r="5"/><circle cx="1840.44" cy="1154" r="5"/><circle cx="1969.3" cy="1154" r="5"/><circle cx="2098.16" cy="1154" r="5"/><circle cx="2227.02" cy="1154" r="5"/></g></svg>
<span class="t tick" style="left:1210.60px;top:1179px;font-size:25.56px;color:#ccccdc;transform:scaleX(0.9771);-webkit-text-stroke:0.35px #ccccdc;">20 GiB</span><span class="t tick" style="left:1192.40px;top:1253px;font-size:25.56px;color:#ccccdc;transform:scaleX(0.9508);-webkit-text-stroke:0.35px #ccccdc;"><span class="o o0">1</span>9.8 GiB</span><span class="t tick" style="left:1192.40px;top:1327px;font-size:25.56px;color:#ccccdc;transform:scaleX(0.9508);-webkit-text-stroke:0.35px #ccccdc;"><span class="o o0">1</span>9.5 GiB</span>
<span class="t tick" style="left:1294.67px;top:1384px;font-size:25.56px;color:#ccccdc;transform:scaleX(0.9423);-webkit-text-stroke:0.35px #ccccdc;"><span class="o o0">1</span>6:<span class="o o0">1</span>0</span><span class="t tick" style="left:1617.57px;top:1384px;font-size:25.56px;color:#ccccdc;transform:scaleX(0.9318);-webkit-text-stroke:0.35px #ccccdc;"><span class="o o0">1</span>6:<span class="o o0">1</span>5</span><span class="t tick" style="left:1937.87px;top:1384px;font-size:25.56px;color:#ccccdc;transform:scaleX(0.9821);-webkit-text-stroke:0.35px #ccccdc;"><span class="o o0">1</span>6:20</span>
<i class="sw" style="left:1200px;top:1435px;background:#89be74"></i><span class="t leg o0" style="left:1243.53px;top:1427px;font-size:25.56px;color:#ccccdc;-webkit-text-stroke:0.35px #ccccdc;">1</span><i class="sw" style="left:1275px;top:1435px;background:#ebcb47"></i><span class="t leg" style="left:1320.63px;top:1427px;font-size:25.56px;color:#ccccdc;transform:scaleX(0.9548);-webkit-text-stroke:0.35px #ccccdc;">2</span><i class="sw" style="left:1354px;top:1435px;background:#94b9f8"></i><span class="t leg" style="left:1399.56px;top:1427px;font-size:25.56px;color:#ccccdc;transform:scaleX(1.0186);-webkit-text-stroke:0.35px #ccccdc;">3</span>
</section>
<section><div class="panel" style="left:2320px;top:1036px;width:1130px;height:440px"></div>
<span class="t title" style="left:2337.87px;top:1058px;font-size:28.0px;color:#ccccdc;transform:scaleX(1.1140);-webkit-text-stroke:0.95px #ccccdc;">Node persistent free storage</span><svg class="info" style="left:2764px;top:1055px" width="30" height="30" viewBox="0 0 30 30"><circle cx="15" cy="15" r="12" fill="none" stroke="#9e9eab" stroke-width="2.6"/><circle cx="15" cy="10.6" r="1.9" fill="#9e9eab"/><rect x="13.6" y="14.4" width="2.8" height="7.6" rx="1.2" fill="#9e9eab"/></svg>
<svg class="chart" style="left:2320px;top:1036px" width="1130" height="440" viewBox="2320 1036 1130 440"><path d="M2471.5 1134V1376M2793.25 1134V1376M3115.5 1134V1376M2442.5 1170.25H3416.75M2442.5 1289.5H3416.75" stroke="#2c3035" stroke-width="1.25" fill="none"/><path d="M2450 1328.5L2471.0 1328.75L2599.86 1333L2728.72 1335L2857.58 1338L2986.44 1340L3115.3 1342L3244.16 1344.75L3373.02 1346.75" stroke="#89be74" stroke-width="2" fill="none" stroke-linejoin="round"/><g fill="#89be74"><circle cx="2471.0" cy="1328.75" r="5"/><circle cx="2599.86" cy="1333" r="5"/><circle cx="2728.72" cy="1335" r="5"/><circle cx="2857.58" cy="1338" r="5"/><circle cx="2986.44" cy="1340" r="5"/><circle cx="3115.3" cy="1342" r="5"/><circle cx="3244.16" cy="1344.75" r="5"/><circle cx="3373.02" cy="1346.75" r="5"/></g><path d="M2450 1160.75L2471.0 1161L2599.86 1163L2728.72 1164L2857.58 1167.25L2986.44 1167L3115.3 1168L3244.16 1170L3373.02 1171.25" stroke="#ebcb47" stroke-width="2" fill="none" stroke-linejoin="round"/><g fill="#ebcb47"><circle cx="2471.0" cy="1161" r="5"/><circle cx="2599.86" cy="1163" r="5"/><circle cx="2728.72" cy="1164" r="5"/><circle cx="2857.58" cy="1167.25" r="5"/><circle cx="2986.44" cy="1167" r="5"/><circle cx="3115.3" cy="1168" r="5"/><circle cx="3244.16" cy="1170" r="5"/><circle cx="3373.02" cy="1171.25" r="5"/></g><path d="M2450 1153.75L2471.0 1154L2599.86 1156L2728.72 1156L2857.58 1159L2986.44 1159.25L3115.3 1160.25L3244.16 1161.75L3373.02 1161.75" stroke="#94b9f8" stroke-width="2" fill="none" stroke-linejoin="round"/><g fill="#94b9f8"><circle cx="2471.0" cy="1154" r="5"/><circle cx="2599.86" cy="1156" r="5"/><circle cx="2728.72" cy="1156" r="5"/><circle cx="2857.58" cy="1159" r="5"/><circle cx="2986.44" cy="1159.25" r="5"/><circle cx="3115.3" cy="1160.25" r="5"/><circle cx="3244.16" cy="1161.75" r="5"/><circle cx="3373.02" cy="1161.75" r="5"/></g></svg>
<span class="t tick" style="left:2338.15px;top:1156px;font-size:25.56px;color:#ccccdc;transform:scaleX(0.9508);-webkit-text-stroke:0.35px #ccccdc;"><span class="o o0">1</span>8.0 GiB</span><span class="t tick" style="left:2338.15px;top:1275px;font-size:25.56px;color:#ccccdc;transform:scaleX(0.9508);-webkit-text-stroke:0.35px #ccccdc;"><span class="o o0">1</span>8.0 GiB</span>
<span class="t tick" style="left:2440.67px;top:1384px;font-size:25.56px;color:#ccccdc;transform:scaleX(0.9423);-webkit-text-stroke:0.35px #ccccdc;"><span class="o o0">1</span>6:<span class="o o0">1</span>0</span><span class="t tick" style="left:2763.32px;top:1384px;font-size:25.56px;color:#ccccdc;transform:scaleX(0.9318);-webkit-text-stroke:0.35px #ccccdc;"><span class="o o0">1</span>6:<span class="o o0">1</span>5</span><span class="t tick" style="left:3083.87px;top:1384px;font-size:25.56px;color:#ccccdc;transform:scaleX(0.9821);-webkit-text-stroke:0.35px #ccccdc;"><span class="o o0">1</span>6:20</span>
<i class="sw" style="left:2346.25px;top:1435px;background:#89be74"></i><span class="t leg o0" style="left:2389.78px;top:1427px;font-size:25.56px;color:#ccccdc;-webkit-text-stroke:0.35px #ccccdc;">1</span><i class="sw" style="left:2421.25px;top:1435px;background:#ebcb47"></i><span class="t leg" style="left:2466.88px;top:1427px;font-size:25.56px;color:#ccccdc;transform:scaleX(0.9548);-webkit-text-stroke:0.35px #ccccdc;">2</span><i class="sw" style="left:2500px;top:1435px;background:#94b9f8"></i><span class="t leg" style="left:2545.81px;top:1427px;font-size:25.56px;color:#ccccdc;transform:scaleX(1.0186);-webkit-text-stroke:0.35px #ccccdc;">3</span>
</section>
<section><div class="panel" style="left:28px;top:1492px;width:1130px;height:440px"></div></section>
<section><div class="panel" style="left:1174px;top:1492px;width:1130px;height:440px"></div></section>
<section><div class="panel" style="left:2320px;top:1492px;width:1130px;height:440px"></div></section>
</main>
</body></html>
